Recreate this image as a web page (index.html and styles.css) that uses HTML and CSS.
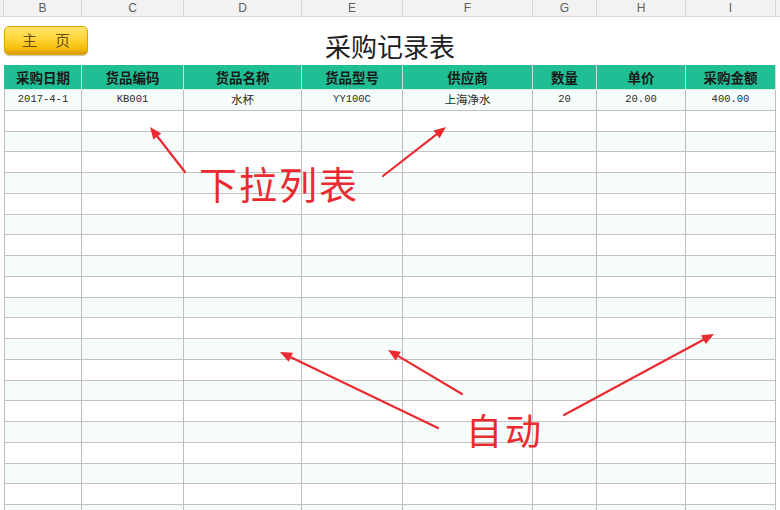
FILE: index.html
```html
<!DOCTYPE html>
<html lang="zh">
<head>
<meta charset="utf-8">
<title>采购记录表</title>
<link rel="stylesheet" href="styles.css">
</head>
<body>
<div class="page">
  <div class="colbar">
    <div class="gut"></div>
    <div class="ch">B</div><div class="ch">C</div><div class="ch">D</div><div class="ch">E</div>
    <div class="ch">F</div><div class="ch">G</div><div class="ch">H</div><div class="ch">I</div>
  </div>
  <div class="top">
    <div class="btnwrap"><button class="home"><span>主</span><span>页</span></button></div>
    <h1 class="title">采购记录表</h1>
    <div></div>
  </div>
  <div class="table">
    <div class="row head">
      <div class="c">采购日期</div><div class="c">货品编码</div><div class="c">货品名称</div><div class="c">货品型号</div>
      <div class="c">供应商</div><div class="c">数量</div><div class="c">单价</div><div class="c">采购金额</div>
    </div>
    <div class="row tint">
      <div class="c">2017-4-1</div><div class="c">KB001</div><div class="c cjk">水杯</div><div class="c">YY100C</div>
      <div class="c cjk">上海净水</div><div class="c">20</div><div class="c">20.00</div><div class="c">400.00</div>
    </div>
    <div class="row"><div class="c"></div><div class="c"></div><div class="c"></div><div class="c"></div><div class="c"></div><div class="c"></div><div class="c"></div><div class="c"></div></div>
    <div class="row tint"><div class="c"></div><div class="c"></div><div class="c"></div><div class="c"></div><div class="c"></div><div class="c"></div><div class="c"></div><div class="c"></div></div>
    <div class="row"><div class="c"></div><div class="c"></div><div class="c"></div><div class="c"></div><div class="c"></div><div class="c"></div><div class="c"></div><div class="c"></div></div>
    <div class="row tint"><div class="c"></div><div class="c"></div><div class="c"></div><div class="c"></div><div class="c"></div><div class="c"></div><div class="c"></div><div class="c"></div></div>
    <div class="row"><div class="c"></div><div class="c"></div><div class="c"></div><div class="c"></div><div class="c"></div><div class="c"></div><div class="c"></div><div class="c"></div></div>
    <div class="row tint"><div class="c"></div><div class="c"></div><div class="c"></div><div class="c"></div><div class="c"></div><div class="c"></div><div class="c"></div><div class="c"></div></div>
    <div class="row"><div class="c"></div><div class="c"></div><div class="c"></div><div class="c"></div><div class="c"></div><div class="c"></div><div class="c"></div><div class="c"></div></div>
    <div class="row tint"><div class="c"></div><div class="c"></div><div class="c"></div><div class="c"></div><div class="c"></div><div class="c"></div><div class="c"></div><div class="c"></div></div>
    <div class="row"><div class="c"></div><div class="c"></div><div class="c"></div><div class="c"></div><div class="c"></div><div class="c"></div><div class="c"></div><div class="c"></div></div>
    <div class="row tint"><div class="c"></div><div class="c"></div><div class="c"></div><div class="c"></div><div class="c"></div><div class="c"></div><div class="c"></div><div class="c"></div></div>
    <div class="row"><div class="c"></div><div class="c"></div><div class="c"></div><div class="c"></div><div class="c"></div><div class="c"></div><div class="c"></div><div class="c"></div></div>
    <div class="row tint"><div class="c"></div><div class="c"></div><div class="c"></div><div class="c"></div><div class="c"></div><div class="c"></div><div class="c"></div><div class="c"></div></div>
    <div class="row"><div class="c"></div><div class="c"></div><div class="c"></div><div class="c"></div><div class="c"></div><div class="c"></div><div class="c"></div><div class="c"></div></div>
    <div class="row tint"><div class="c"></div><div class="c"></div><div class="c"></div><div class="c"></div><div class="c"></div><div class="c"></div><div class="c"></div><div class="c"></div></div>
    <div class="row"><div class="c"></div><div class="c"></div><div class="c"></div><div class="c"></div><div class="c"></div><div class="c"></div><div class="c"></div><div class="c"></div></div>
    <div class="row tint"><div class="c"></div><div class="c"></div><div class="c"></div><div class="c"></div><div class="c"></div><div class="c"></div><div class="c"></div><div class="c"></div></div>
    <div class="row"><div class="c"></div><div class="c"></div><div class="c"></div><div class="c"></div><div class="c"></div><div class="c"></div><div class="c"></div><div class="c"></div></div>
    <div class="row tint"><div class="c"></div><div class="c"></div><div class="c"></div><div class="c"></div><div class="c"></div><div class="c"></div><div class="c"></div><div class="c"></div></div>
    <div class="row"><div class="c"></div><div class="c"></div><div class="c"></div><div class="c"></div><div class="c"></div><div class="c"></div><div class="c"></div><div class="c"></div></div>
    <div class="row tint"><div class="c"></div><div class="c"></div><div class="c"></div><div class="c"></div><div class="c"></div><div class="c"></div><div class="c"></div><div class="c"></div></div>
    <div class="row"><div class="c"></div><div class="c"></div><div class="c"></div><div class="c"></div><div class="c"></div><div class="c"></div><div class="c"></div><div class="c"></div></div>
    <div class="row tint"><div class="c"></div><div class="c"></div><div class="c"></div><div class="c"></div><div class="c"></div><div class="c"></div><div class="c"></div><div class="c"></div></div>
  </div>

  <svg class="arrows" width="780" height="510" viewBox="0 0 780 510" aria-hidden="true">
    <g stroke="#ea2a30" stroke-width="2.2" stroke-linecap="round" fill="none">
      <line x1="185" y1="172" x2="157.4" y2="136.5"/>
      <line x1="383" y1="176" x2="436.5" y2="134.4"/>
      <line x1="438" y1="428" x2="290.8" y2="357.2"/>
      <line x1="462" y1="394" x2="398.3" y2="356.1"/>
      <line x1="564" y1="415" x2="703.4" y2="339.7"/>
    </g>
    <g fill="#ea2a30">
      <polygon points="150,127 161.3,133.4 153.4,139.5"/>
      <polygon points="446,127 439.6,138.3 433.5,130.4"/>
      <polygon points="280,352 293,352.7 288.6,361.7"/>
      <polygon points="388,350 400.9,351.8 395.7,360.4"/>
      <polygon points="714,334 705.8,344.1 701,335.3"/>
    </g>
  </svg>
  <div class="note note1">下拉列表</div>
  <div class="note note2">自动</div>
</div>
</body>
</html>
```

FILE: styles.css
```css
* { box-sizing: border-box; }
html, body { margin: 0; padding: 0; background: #fff; }
body { width: 780px; height: 510px; overflow: hidden; font-family: "Noto Sans CJK SC", "Liberation Sans", sans-serif; }

.page { position: relative; width: 780px; height: 510px; overflow: hidden; }

.colbar {
  display: grid;
  grid-template-columns: 4px 78px 102px 118px 101px 130px 64px 89px 90px 4px;
  height: 17px;
  background: #f2f2f2;
  border-bottom: 1px solid #dadada;
}
.colbar .gut { border-right: 1px solid #d6d6d6; }
.ch {
  border-right: 1px solid #d6d6d6;
  font-family: "Liberation Sans", Arial, sans-serif;
  font-size: 12px;
  color: #606060;
  text-align: center;
  line-height: 16px;
}

.top {
  display: grid;
  grid-template-columns: 1fr auto 1fr;
  align-items: start;
  height: 48px;
}
.btnwrap { padding: 9px 0 0 4px; }
.home {
  display: flex;
  justify-content: center;
  gap: 18px;
  width: 84px;
  height: 29px;
  border: 1px solid #d9a300;
  border-radius: 5px;
  background: linear-gradient(#ffe46a 0%, #ffd53a 45%, #f5bd0a 80%, #d89b00 100%);
  box-shadow: 0 1px 1px rgba(120, 80, 0, 0.35);
  font-family: "Noto Sans CJK SC", sans-serif;
  font-size: 15px;
  color: #66501a;
  line-height: 26px;
  padding: 0;
}
.title {
  margin: 14px 0 0;
  font-family: "Noto Sans CJK SC", sans-serif;
  font-weight: 400;
  font-size: 26px;
  line-height: 30px;
  color: #1e1e1e;
}

.table { margin-left: 4px; width: 772px; }
.row {
  display: grid;
  grid-template-columns: 78px 102px 118px 101px 130px 64px 89px 90px;
  height: 20.75px;
  border-bottom: 1px solid #c2c2c2;
  background: #fff;
}
.row.tint { background: #f6fcfa; }
.row .c {
  border-right: 1px solid #bdbdbd;
  font-family: "Liberation Mono", "Noto Sans CJK SC", monospace;
  font-size: 10.5px;
  color: #2a2a2a;
  text-align: center;
  line-height: 19px;
  white-space: nowrap;
}
.row .c:first-child { border-left: 1px solid #bdbdbd; }
.row .c.cjk { font-family: "Noto Sans CJK SC", sans-serif; font-size: 11.5px; }

.row.head {
  height: 25px;
  background: #1fbe94;
  border-bottom: 1px solid #d9efe8;
}
.row.head .c {
  border-right: 1px solid #b7e8d8;
  font-family: "Noto Sans CJK SC", sans-serif;
  font-weight: 700;
  font-size: 13.5px;
  color: #1a1a1a;
  line-height: 24px;
}
.row.head .c:first-child { border-left: 1px solid #1fbe94; }

.arrows { position: absolute; left: 0; top: 0; pointer-events: none; }
.note {
  position: absolute;
  font-family: "Noto Sans CJK SC", sans-serif;
  font-weight: 400;
  color: #ea2a30;
  line-height: 1;
  white-space: nowrap;
}
.note1 { left: 199px; top: 164px; font-size: 38px; letter-spacing: 2px; }
.note2 { left: 466px; top: 411px; font-size: 36px; letter-spacing: 3px; }
```
